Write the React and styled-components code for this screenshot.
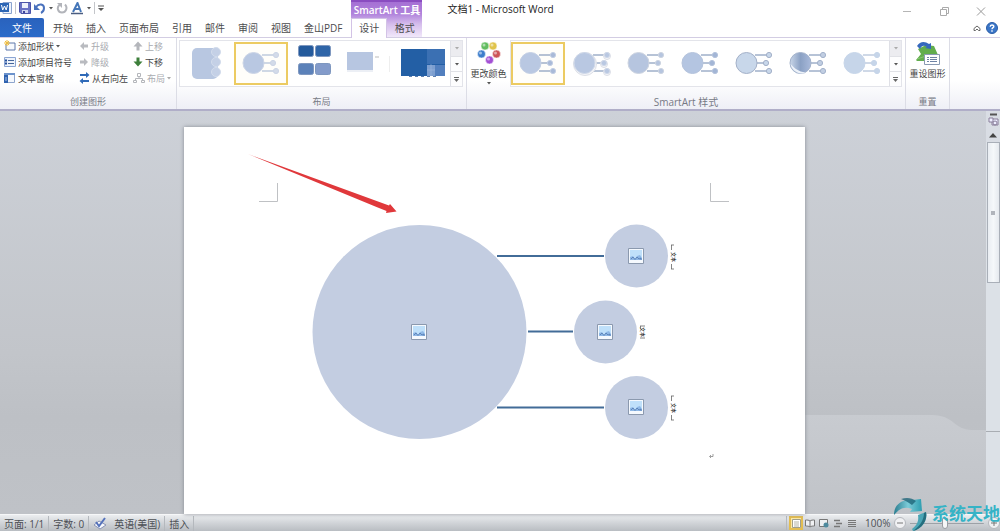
import React from "react";
import styled, { createGlobalStyle, css } from "styled-components";

const GlobalStyle = createGlobalStyle`
  * { box-sizing: border-box; }
  html, body { margin: 0; height: 100%; }
  body {
    font-family: "Open Sans", "Noto Sans CJK SC", sans-serif;
    font-size: 10px;
    color: #4c4c4e;
    overflow: hidden;
  }
  button {
    margin: 0;
    padding: 0;
    border: 0;
    background: none;
    font: inherit;
    color: inherit;
    white-space: nowrap;
  }
  svg { display: block; flex: none; }
`;

const Window = styled.div`
  position: relative;
  display: flex;
  flex-direction: column;
  height: 100vh;
  background: #fff;
`;

/* ---------- title bar and tabs ---------- */

const Header = styled.header`
  display: flex;
  flex: none;
  border-bottom: 1px solid #d3cde3;
`;

const HeaderColumn = styled.div`
  display: flex;
  flex-direction: column;
  flex: ${(p) => (p.$grow ? 1 : "none")};
`;

const QuickAccess = styled.div`
  display: flex;
  align-items: center;
  gap: 3px;
  height: 18px;
  padding-bottom: 2px;
`;

const Divider = styled.span`
  width: 1px;
  height: 12px;
  background: #c4c6ca;
`;

const TabRow = styled.nav`
  display: flex;
  align-items: stretch;
  gap: 13px;
  height: 19px;
  padding-right: 9px;
`;

const Tab = styled.button`
  line-height: 18px;
`;

const FileTab = styled(Tab)`
  width: 44px;
  margin-right: -4px;
  color: #fff;
  background: linear-gradient(#2a62bd, #2b6bc9);
  border-radius: 1px 2px 0 0;
`;

const ContextGroup = styled.div`
  width: 71px;
  background: linear-gradient(#a56fd4 0, #b184dc 12px, #d5bdec 22px, #f1e8fa 100%);
  border-top: 2px solid #8a4cc0;
`;

const ContextTitle = styled.div`
  height: 16px;
  line-height: 16px;
  text-align: center;
  color: #fff;
  font-weight: 600;
  white-space: nowrap;
`;

const ContextTabs = styled.div`
  display: grid;
  grid-template-columns: 1fr 1fr;
  height: 19px;
`;

const ContextTab = styled(Tab)`
  ${(p) =>
    p.$active &&
    css`
      background: #fff;
      border: 1px solid #d3c3e6;
      border-bottom: 0;
      margin-bottom: -1px;
      padding-bottom: 2px;
      line-height: 16px;
    `}
`;

const TitleBar = styled.div`
  display: flex;
  align-items: center;
  justify-content: space-between;
  height: 20px;
  padding: 0 14px 0 25px;
`;

const Title = styled.h1`
  margin: 0;
  font-size: 10px;
  line-height: 14px;
  padding-bottom: 2px;
  font-weight: 400;
  color: #222;
`;

const WindowButtons = styled.div`
  display: flex;
  gap: 27px;
  padding-top: 2px;
`;

const HelpRow = styled.div`
  display: flex;
  justify-content: flex-end;
  align-items: center;
  gap: 5px;
  height: 17px;
  padding: 0 2px 1px 0;
`;

/* ---------- ribbon ---------- */

const Ribbon = styled.section`
  display: flex;
  flex: none;
  height: 73px;
  background: linear-gradient(#fff 60%, #eeeff6);
  border-bottom: 2px solid #b0aec8;
`;

const Group = styled.div`
  display: flex;
  flex-direction: column;
  flex: none;
  width: ${(p) => p.$width}px;
  border-right: 1px solid #dcdde6;
`;

const GroupBody = styled.div`
  display: flex;
  flex: 1;
  padding-left: ${(p) => p.$inset || 0}px;
`;

const GroupLabel = styled.div`
  height: 15px;
  line-height: 16px;
  text-align: center;
  font-size: ${(p) => (p.$latin ? 10 : 9)}px;
  color: #777a85;
`;

const CommandGrid = styled.div`
  display: grid;
  grid-template-columns: 75px 54px 42px;
  grid-auto-rows: 16px;
`;

const Command = styled.button`
  display: flex;
  align-items: center;
  gap: 2px;
  font-size: 9px;
  color: ${(p) => (p.disabled ? "#a9abb0" : "#444")};
`;

const LargeCommand = styled.button`
  display: flex;
  flex-direction: column;
  align-items: center;
  gap: 2px;
  width: 43px;
  padding-top: 3px;
  font-size: 9px;
  line-height: 13px;
  color: #444;
`;

const Gallery = styled.div`
  display: flex;
  height: 47px;
  margin-top: 2px;
  background: #fff;
  border: 1px solid #e3e4ea;
`;

const GalleryItem = styled.button`
  width: 54px;
  height: 43px;
  margin-top: 1px;
  overflow: hidden;
  ${(p) =>
    p.$selected &&
    css`
      outline: 2px solid #eccb62;
      outline-offset: -2px;
      background: #fffefa;
    `}
`;

const GalleryScroll = styled.div`
  display: grid;
  grid-template-rows: repeat(3, 1fr);
  width: 12px;
  margin-left: auto;
  border-left: 1px solid #dfe0e6;
`;

const ScrollStep = styled.button`
  display: grid;
  place-items: center;
  background: ${(p) => (p.disabled ? "#ececf0" : "#fdfdfe")};
  & + & { border-top: 1px solid #e0e1e6; }
`;

/* ---------- document ---------- */

const Workspace = styled.main`
  position: relative;
  display: flex;
  flex: 1;
  min-height: 0;
  background: linear-gradient(#cdd1d8, #c2c5ca 60%, #bdc0c5 76%, #bfc2c7);
`;

const Swoosh = styled.svg`
  position: absolute;
  right: 14px;
  bottom: 0;
`;

const Desk = styled.div`
  position: relative;
  display: flex;
  justify-content: center;
  flex: 1;
  padding: 16px 0 0 2px;
`;

const Paper = styled.article`
  width: 621px;
  max-width: 90%;
  background: #fff;
  box-shadow: 0 0 4px #858a92;
`;

const ScrollBar = styled.aside`
  position: relative;
  display: flex;
  flex-direction: column;
  align-items: center;
  width: 14px;
  background: #dce1e7;
`;

const ScrollButton = styled.button`
  display: grid;
  place-items: center;
  width: 14px;
  height: ${(p) => p.$height}px;
  background: #d9dde4;
`;

const ScrollThumb = styled.div`
  display: grid;
  place-items: center;
  width: 13px;
  height: 35%;
  background: linear-gradient(90deg, #e9edf2, #f5f8fa 50%, #e5e9ee);
  border: 1px solid #a9afb8;
`;

const ScrollGrip = styled.span`
  width: 4px;
  height: 4px;
  background: #b1b5bc;
`;

const TrackEnd = styled.span`
  width: 14px;
  margin: auto 0 82px;
  border-top: 1px solid #a9adb3;
`;

/* ---------- status bar ---------- */

const StatusBar = styled.footer`
  display: flex;
  align-items: center;
  flex: none;
  height: 17px;
  background: linear-gradient(#eceef0, #d3d6da 45%, #b9bdc2);
  border-top: 1px solid #f6f7f8;
  color: #4c4f54;
`;

const StatusItem = styled.button`
  display: flex;
  align-items: center;
  gap: 7px;
  height: 15px;
  padding: 0 4px;
  border-right: 1px solid #b4b8bd;
`;

const Views = styled.div`
  display: flex;
  align-items: center;
  margin-left: auto;
  border-left: 1px solid #b4b8bd;
  padding-left: 2px;
`;

const ViewButton = styled.button`
  display: grid;
  place-items: center;
  width: 14px;
  height: 14px;
  ${(p) =>
    p.$active &&
    css`
      background: #fbe9a6;
      box-shadow: inset 0 0 0 2px #e3bd51;
    `}
`;

const ZoomControl = styled.div`
  display: flex;
  align-items: center;
  width: 141px;
  padding-left: 6px;
  gap: 4px;
`;

const ZoomStep = styled.button`
  display: grid;
  place-items: center;
  flex: none;
  width: 12px;
  height: 12px;
  border-radius: 6px;
  border: 1px solid #b5b8bd;
  background: #f0f1f3;
`;

const ZoomSlider = styled.input`
  appearance: none;
  flex: 1;
  min-width: 0;
  height: 12px;
  margin: 0;
  background: linear-gradient(#9da1a7, #9da1a7) center / 100% 1px no-repeat;
  &::-webkit-slider-thumb {
    appearance: none;
    width: 6px;
    height: 11px;
    border: 1px solid #999da3;
    border-radius: 0 0 3px 3px;
    background: #f6f7f8;
  }
`;

const Watermark = styled.div`
  position: absolute;
  right: 0;
  bottom: 0;
  display: flex;
  width: 106px;
  height: 34px;
  overflow: hidden;
  pointer-events: none;
`;

const WatermarkText = styled.span`
  flex: none;
  margin-left: 4px;
  font: 700 17px/32px "Noto Sans CJK SC", sans-serif;
  color: #35b3c6;
`;

/* ---------- drawings ---------- */

const Caret = ({ color = "#555" }) => (
  <svg width="4" height="3" viewBox="0 0 4 3"><path d="M0 0h4L2 2.6z" fill={color} /></svg>
);

const ArrowIcon = ({ up, color }) => (
  <svg width="10" height="10" viewBox="0 0 10 10">
    <path transform={up ? undefined : "rotate(180 5 5)"} d="M5 .5 9.500 5.500H6.500v4h-3v-4H.5z" fill={color} />
  </svg>
);

const SideArrow = ({ right }) => (
  <svg width="10" height="10" viewBox="0 0 10 10">
    <path transform={right ? "rotate(180 5 5)" : undefined} d="M1 5 5 1v2.500h4v3H5V9z" fill="#b9bbc0" />
  </svg>
);

const AddShapeIcon = () => (
  <svg width="12" height="12" viewBox="0 0 12 12">
    <path d="M3 3h8v7H2V4" fill="#f7f9fd" stroke="#5f79ab" />
    <path d="M3 0v6M0 3h6M1 1l4 4M5 1 1 5" stroke="#f0bd3c" />
  </svg>
);

const BulletIcon = () => (
  <svg width="12" height="12" viewBox="0 0 12 12">
    <path d="M.5 1.500h11v9H.5z" fill="#eef3fb" stroke="#8ba5d2" />
    <path d="M1 4.500h2M1 7.500h2" stroke="#234f9c" strokeWidth="2" />
    <path d="M4 4.500h6M4 7.500h6" stroke="#44659b" />
  </svg>
);

const PaneIcon = () => (
  <svg width="12" height="12" viewBox="0 0 12 12">
    <path d="M.5 1.500h10v9H.5z" fill="#f5f8fd" stroke="#8ea5cd" />
    <path d="M0 1h11v2H0z" fill="#6b92cc" /><path d="M0 3h4v8H0z" fill="#2f62b0" />
    <path d="M1 6h2M1 8h2" stroke="#a9c0e4" />
  </svg>
);

const SwapIcon = () => (
  <svg width="11" height="12" viewBox="0 0 11 12">
    <path d="M1 2h6V0l3.500 3L7 6V4H1zM10 8H4V6L.5 9 4 12v-2h6z" fill="#2f6ab8" />
  </svg>
);

const OrgIcon = () => (
  <svg width="12" height="12" viewBox="0 0 12 12" fill="none" stroke="#b4b6bb">
    <path d="M4.500 1.500h3v3h-3zM.5 8.500h3v2h-3zM8.500 8.500h3v2h-3zM6 5v2M2.500 8V6.500h7V8" />
  </svg>
);

const LinkedCircles = ({ fill = "#b9c8e2", stroke = "#c3cfe4", small, faded, shadow, glossy }) => (
  <svg width="54" height="43" viewBox="0 0 54 43">
    <defs>
      <linearGradient id="gloss" x1="0" y1="0" x2="1" y2="0">
        <stop offset="0" stopColor="#c9d6e8" />
        <stop offset=".5" stopColor="#8ba1c4" />
        <stop offset="1" stopColor="#a9badb" />
      </linearGradient>
    </defs>
    <path d="M28 13h14M30 21h9M28 29h14" stroke={faded ? "#9fb2cf" : "#6f87ae"} />
    {shadow && (
      <g fill="#f4f5f8" stroke="#dcdfe7">
        <circle cx="20" cy="22" r="11.500" />
        <circle cx="42" cy="14" r="3.500" /><circle cx="39" cy="22" r="3.500" /><circle cx="42" cy="30" r="3.500" />
      </g>
    )}
    <g fill={fill} stroke={stroke}>
      <circle cx="19.500" cy="21" r="10.500" fill={glossy ? "url(#gloss)" : fill} />
      <g fill={small || fill}>
        <circle cx="42" cy="13" r="2.600" /><circle cx="39" cy="21" r="2.600" /><circle cx="42" cy="29" r="2.600" />
      </g>
    </g>
    {glossy && <path d="M9.500 22c1 5 5 9 11 9.500 2 0 3-.5 4-1-7-1-11-4-15-8.500z" fill="#edf2f9" />}
  </svg>
);

const LayoutThumbs = [
  <svg key="a" width="54" height="43" viewBox="0 0 54 43">
    <rect x="12" y="6" width="26" height="31" rx="5" fill="#b8c7e1" />
    <g fill="#c4d0e6" stroke="#d3dcec"><circle cx="36" cy="10" r="4.500" /><circle cx="36" cy="20" r="4.500" /><circle cx="36" cy="30" r="4.500" /></g>
  </svg>,
  <LinkedCircles key="b" small="#d3dbe9" stroke="#ccd5e6" faded />,
  <svg key="c" width="54" height="43" viewBox="0 0 54 43">
    <g stroke="#7e97bf">
      <rect x="10.500" y="3.500" width="15" height="11" rx="2" fill="#245a9c" /><rect x="27.500" y="3.500" width="15" height="11" rx="2" fill="#2f65a8" />
      <rect x="10.500" y="21.500" width="15" height="11" rx="2" fill="#5b81b9" /><rect x="27.500" y="21.500" width="15" height="11" rx="2" fill="#839bca" />
    </g>
  </svg>,
  <svg key="d" width="54" height="43" viewBox="0 0 54 43">
    <path d="M5 10h26v18H5z" fill="#b7c6e1" /><path d="M5 29h26" stroke="#d9dfeb" /><path d="M33 15h4" stroke="#bbb" /><path d="M47.500 14v16" stroke="#eee" />
  </svg>,
  <svg key="e" width="54" height="43" viewBox="0 0 54 43">
    <path d="M5 7h44v27H5z" fill="#235fa5" /><path d="M31 7h18v15H31z" fill="#3b70b3" />
    <path d="M31 23h8v11h-8z" fill="#7d9fd0" /><path d="M39 23h10v11H39z" fill="#527fbe" /><path d="M31 28h8M35 22v12" stroke="#a6bce0" strokeOpacity=".5" />
    <path d="M13 34.500h30" stroke="#5c7fb0" strokeDasharray="3 3" />
  </svg>,
];

const PictureIcon = ({ x, y }) => (
  <g transform={`translate(${x - 8} ${y - 8})`}>
    <path d="M.5.5h15v15H.5z" fill="#f5f9fe" stroke="#8b99ae" />
    <path d="M2 2h12v10H2z" fill="#bfe0fa" />
    <path d="M2 12V9l3-1 2 3 2-3 3-1 2 3v2z" fill="#8fb8e6" />
    <path d="m3 11 2-2 2 2.500L9 9l2 2 2-1v2" fill="none" stroke="#5279b0" strokeWidth=".8" />
  </g>
);

const NodeLabel = ({ x, y, wide }) => (
  <g transform={`translate(${x} ${y}) rotate(90)`}>
    <text y="2" textAnchor="middle" fontSize="5" fill="#111">文本</text>
    <path d={wide ? "M-12 2.500h5M7 2.500h5M-12 0v3M12 0v3" : "M-6 2.500h3M-6-2v5M6-2v5"} fill="none" stroke="#666" strokeWidth=".8" />
  </g>
);

const SmartArt = () => (
  <svg width="100%" viewBox="184 127 621 387" role="img" aria-label="SmartArt">
    <path d="M277.500 183v18.500H259M710.500 183v18.500H729" fill="none" stroke="#bfc1c4" />
    <path d="M497 256h107M528 331.500h45M497 407.500h107" stroke="#426c98" strokeWidth="2" />
    <g fill="#c3cde1">
      <circle cx="419.500" cy="332" r="107" />
      <circle cx="636.500" cy="256" r="31.500" />
      <circle cx="605.500" cy="332" r="31.500" />
      <circle cx="636.500" cy="407.500" r="31.500" />
    </g>
    <PictureIcon x={419} y={332} />
    <PictureIcon x={636} y={256} />
    <PictureIcon x={605} y={332} />
    <PictureIcon x={636} y={407} />
    <NodeLabel x={674} y={257} wide />
    <NodeLabel x={643} y={332} />
    <NodeLabel x={674} y={408} wide />
    <path d="m248 154 141 51.500 1-1.500 6.500 7.500-10.500 1.500.5-2-10-4z" fill="#e0383b" />
    <path d="M713 454v2.500h-3m1-1.500-1.500 1.500 1.500 1.500" fill="none" stroke="#777" strokeWidth=".7" />
  </svg>
);

const steps = ["向上", "向下", "更多"];
const Steps = () => (
  <GalleryScroll>
    {steps.map((s, i) => (
      <ScrollStep key={s} aria-label={s} disabled={i === 0}>
        {i === 2 ? (
          <svg width="5" height="5" viewBox="0 0 5 5"><path d="M0 .5h5" stroke="#666" /><path d="M0 2h5L2.500 5z" fill="#666" /></svg>
        ) : (
          <Caret color={i ? "#555" : "#aaa"} />
        )}
      </ScrollStep>
    ))}
  </GalleryScroll>
);

const styleLooks = [
  { small: "#a9bad8" },
  { shadow: true, stroke: "#cfd8e9" },
  { fill: "#b6c5df", stroke: "#cdd4e0" },
  { fill: "#b4c5e1", stroke: "#b4c3dc", small: "#a3b6d6" },
  { fill: "#c8d7ea", stroke: "#a3b0c8" },
  { glossy: true, stroke: "#a3b2cb", fill: "#c1cee2" },
  { fill: "#c6d5e9", stroke: "#c6d5e9", faded: true },
];

export default function App() {
  return (
    <Window>
      <GlobalStyle />
      <Header>
        <HeaderColumn>
          <QuickAccess>
            <svg width="12" height="14" viewBox="0 0 12 14">
              <path d="M3 1.500h8.500v11H3z" fill="#eef3fb" stroke="#8ba4cf" /><path d="M0 2h9v9H0z" fill="#2d66b5" />
              <path d="m1.500 4 1.200 5 1.800-4 1.700 4 1.300-5" fill="none" stroke="#fff" />
            </svg>
            <Divider />
            <button aria-label="保存">
              <svg width="12" height="12" viewBox="0 0 12 12"><path d="M.5.5h11v11H2l-1.500-1.500z" fill="#6a72c4" stroke="#4c54a8" /><path d="M3 1h6v5H3z" fill="#edf0fa" /><path d="M3 8h6v3H3z" fill="#cfd4ee" /><path d="M4 9h2v2H4z" fill="#3f479c" /></svg>
            </button>
            <button aria-label="撤消">
              <svg width="12" height="12" viewBox="0 0 12 12"><path d="M2 5c3-4 8-3 8 1 0 2-1 4-3 5" fill="none" stroke="#4a72bd" strokeWidth="2" /><path d="M0 2v6h6z" fill="#4a72bd" /></svg>
            </button>
            <Caret />
            <button aria-label="重复">
              <svg width="12" height="12" viewBox="0 0 12 12"><path d="M9 2.500c3 3 1 8-3 8s-6-5-2-8" fill="none" stroke="#b2b4ba" strokeWidth="2" /><path d="M1 1h5v5z" fill="#b2b4ba" /></svg>
            </button>
            <button aria-label="字体颜色">
              <svg width="13" height="13" viewBox="0 0 13 13"><path d="m2 10 4.500-9 3.500 9M4 7h5" fill="none" stroke="#4576b8" strokeWidth="2" /><path d="M0 11.500h12" stroke="#4b5d80" strokeWidth="1.500" /></svg>
            </button>
            <Caret />
            <Divider />
            <svg width="6" height="7" viewBox="0 0 6 7"><path d="M0 1h6" stroke="#555" /><path d="M0 3h6L3 6z" fill="#555" /></svg>
          </QuickAccess>
          <TabRow>
            <FileTab>文件</FileTab>
            {["开始", "插入", "页面布局", "引用", "邮件", "审阅", "视图", "金山PDF"].map((t) => (
              <Tab key={t}>{t}</Tab>
            ))}
          </TabRow>
        </HeaderColumn>
        <ContextGroup>
          <ContextTitle>SmartArt 工具</ContextTitle>
          <ContextTabs>
            <ContextTab $active>设计</ContextTab>
            <ContextTab>格式</ContextTab>
          </ContextTabs>
        </ContextGroup>
        <HeaderColumn $grow>
          <TitleBar>
            <Title>文档1 - Microsoft Word</Title>
            <WindowButtons>
              <button aria-label="最小化"><svg width="10" height="9" viewBox="0 0 10 9"><path d="M1 4.500h8" stroke="#b5b5b5" /></svg></button>
              <button aria-label="还原"><svg width="10" height="9" viewBox="0 0 10 9" fill="none" stroke="#aaa"><path d="M1.500 2.500h6v6h-6zM3.500 2V.5h6v6H8" /></svg></button>
              <button aria-label="关闭"><svg width="10" height="9" viewBox="0 0 10 9" stroke="#999"><path d="m1 .5 8 8M9 .5l-8 8" /></svg></button>
            </WindowButtons>
          </TitleBar>
          <HelpRow>
            <button aria-label="折叠功能区"><svg width="8" height="7" viewBox="0 0 8 7"><path d="M1 3.500 4 1l3 2.500M1 3.500v2h1.500L4 4l1.500 1.500H7v-2" fill="none" stroke="#666" /></svg></button>
            <button aria-label="帮助">
              <svg width="12" height="12" viewBox="0 0 12 12"><circle cx="6" cy="6" r="5.500" fill="#3a76c8" stroke="#2c5da6" /><path d="M4.200 4.700c0-2.300 3.600-2.300 3.600-.2C7.800 5.700 6 5.700 6 7.300M6 8.300v1.400" fill="none" stroke="#fff" strokeWidth="1.400" /></svg>
            </button>
          </HelpRow>
        </HeaderColumn>
      </Header>

      <Ribbon>
        <Group $width={177}>
          <GroupBody $inset={4}>
            <CommandGrid>
              <Command><AddShapeIcon />添加形状 <Caret /></Command>
              <Command disabled><SideArrow />升级</Command>
              <Command disabled><ArrowIcon up color="#b4b6bb" />上移</Command>
              <Command><BulletIcon />添加项目符号</Command>
              <Command disabled><SideArrow right />降级</Command>
              <Command><ArrowIcon color="#3d7f3a" />下移</Command>
              <Command><PaneIcon />文本窗格</Command>
              <Command><SwapIcon />从右向左</Command>
              <Command disabled><OrgIcon />布局 <Caret color="#aaa" /></Command>
            </CommandGrid>
          </GroupBody>
          <GroupLabel>创建图形</GroupLabel>
        </Group>

        <Group $width={290}>
          <GroupBody $inset={2}>
            <Gallery>
              {LayoutThumbs.map((thumb, i) => (
                <GalleryItem key={i} $selected={i === 1} aria-label={`布局 ${i + 1}`}>{thumb}</GalleryItem>
              ))}
              <Steps />
            </Gallery>
          </GroupBody>
          <GroupLabel>布局</GroupLabel>
        </Group>

        <Group $width={439}>
          <GroupBody>
            <LargeCommand>
              <svg width="24" height="24" viewBox="0 0 24 24">
                <g stroke="#fff" strokeWidth=".5">
                  <circle cx="8" cy="5" r="4" fill="#62bd60" /><circle cx="16" cy="5" r="4" fill="#e0c44b" />
                  <circle cx="4.500" cy="13" r="4" fill="#3d7dcc" /><circle cx="19.500" cy="13" r="4" fill="#cc5558" />
                  <circle cx="12.500" cy="19" r="4" fill="#a34fd4" />
                </g>
                <g fill="#fff" opacity=".5"><circle cx="7" cy="4" r="1.500" /><circle cx="15" cy="4" r="1.500" /><circle cx="3.500" cy="12" r="1.500" /><circle cx="18.500" cy="12" r="1.500" /><circle cx="11.500" cy="18" r="1.500" /></g>
              </svg>
              更改颜色
              <Caret />
            </LargeCommand>
            <Gallery>
              {styleLooks.map((look, i) => (
                <GalleryItem key={i} $selected={i === 0} aria-label={`样式 ${i + 1}`}><LinkedCircles {...look} /></GalleryItem>
              ))}
              <Steps />
            </Gallery>
          </GroupBody>
          <GroupLabel $latin>SmartArt 样式</GroupLabel>
        </Group>

        <Group $width={44}>
          <GroupBody>
            <LargeCommand>
              <svg width="26" height="24" viewBox="0 0 26 24">
                <path d="M1 19 6 13 3 8l8-4 8 1 4 9v6H2z" fill="#62ad4d" /><path d="M2 18l12-4" fill="none" stroke="#87c774" />
                <path d="M2 5c3-5 8-5 12-2l2-1v6l-6-1 2-1C9 4 7 4 5 8z" fill="#3568bd" />
                <path d="M9.500 13.500h15v10h-15z" fill="#fff" stroke="#8a9ab2" /><path d="M12 16.500h2m1 0h7M12 18.500h2m1 0h7M12 20.500h2m1 0h7" stroke="#6e83a5" />
              </svg>
              重设图形
            </LargeCommand>
          </GroupBody>
          <GroupLabel>重置</GroupLabel>
        </Group>
      </Ribbon>

      <Workspace>
        <Swoosh width="182" height="100" viewBox="0 0 182 100">
          <defs><linearGradient id="wave" x1="0" y1="0" x2="0" y2="1"><stop offset="0" stopColor="#c8cbd0" /><stop offset="1" stopColor="#c0c3c8" /></linearGradient></defs>
          <path d="M0 1h128c22 0 22 15 40 15h14v84H0z" fill="url(#wave)" />
        </Swoosh>
        <Desk>
          <Paper><SmartArt /></Paper>
        </Desk>
        <ScrollBar>
          <ScrollButton $height={17} aria-label="标尺">
            <svg width="11" height="14" viewBox="0 0 11 14"><path d="M2 1.500h7" stroke="#555" strokeWidth="2" /><path d="M1 5h4v4H1zM5 6h5v6H4V9" fill="#eef" stroke="#897f9a" /><circle cx="7" cy="10" r="2" fill="none" stroke="#897f9a" /></svg>
          </ScrollButton>
          <ScrollButton $height={14} aria-label="向上滚动">
            <svg width="8" height="5" viewBox="0 0 8 5"><path d="M0 4.500 4 0l4 4.500z" fill="#444" /></svg>
          </ScrollButton>
          <ScrollThumb><ScrollGrip /></ScrollThumb>
          <TrackEnd />
        </ScrollBar>
      </Workspace>

      <StatusBar>
        <StatusItem>页面: 1/1</StatusItem>
        <StatusItem>字数: 0</StatusItem>
        <StatusItem>
          <svg width="14" height="13" viewBox="0 0 14 13"><path d="m1 8 5-4 7 4-6 4z" fill="#f8f9fc" stroke="#8792b5" /><path d="m3 5 3 4 6-8" fill="none" stroke="#5572bb" strokeWidth="2" /></svg>
          英语(美国)
        </StatusItem>
        <StatusItem>插入</StatusItem>
        <Views>
          <ViewButton $active aria-label="页面视图"><svg width="9" height="9" viewBox="0 0 9 9"><path d="M.5.5h8v8h-8z" fill="#fff" stroke="#a09f8c" /><path d="M2 3h5M2 5h5M2 7h5" stroke="#b5b4a5" /></svg></ViewButton>
          <ViewButton aria-label="阅读版式"><svg width="10" height="9" viewBox="0 0 10 9"><path d="M5 2C4 1 2 1 .5 1v6C2 7 4 7 5 8c1-1 3-1 4.500-1V1C8 1 6 1 5 2v6" fill="#f0f1f3" stroke="#777" /></svg></ViewButton>
          <ViewButton aria-label="Web 版式"><svg width="10" height="10" viewBox="0 0 10 10"><path d="M.5 1.500h8v7h-8z" fill="#eef0f2" stroke="#777" /><circle cx="7" cy="7" r="2.500" fill="#4e8a9e" /></svg></ViewButton>
          <ViewButton aria-label="大纲视图"><svg width="10" height="9" viewBox="0 0 10 9"><path d="M1 1.500h6M3 4.500h6M1 7.500h6" stroke="#777" strokeWidth="1.500" /></svg></ViewButton>
          <ViewButton aria-label="草稿"><svg width="10" height="9" viewBox="0 0 10 9"><path d="M1 1.500h8M1 3.500h8M1 5.500h8M1 7.500h8" stroke="#777" /></svg></ViewButton>
        </Views>
        <ZoomControl>
          <button>100%</button>
          <ZoomStep aria-label="缩小"><svg width="6" height="2" viewBox="0 0 6 2"><path d="M0 1h6" stroke="#777" /></svg></ZoomStep>
          <ZoomSlider type="range" min="0" max="100" defaultValue="47" aria-label="显示比例" />
          <ZoomStep aria-label="放大"><svg width="6" height="6" viewBox="0 0 6 6"><path d="M0 3h6M3 0v6" stroke="#777" /></svg></ZoomStep>
        </ZoomControl>
      </StatusBar>

      <Watermark>
        <svg width="34" height="34" viewBox="0 0 34 34">
          <defs>
            <linearGradient id="ribbonTop" x1="0" y1="0" x2="1" y2="0"><stop offset="0" stopColor="#2a7d90" /><stop offset=".5" stopColor="#7ccbd8" /><stop offset="1" stopColor="#2d9db0" /></linearGradient>
          </defs>
          <path d="M0 18C0 8 7 2 18 3l9-1 1 12-12 1 2-3C10 9 5 12 0 18z" fill="url(#ribbonTop)" />
          <path d="M7 2c6-2 11-1 15 2l-4 4C14 5 10 3 7 2z" fill="#1f6579" opacity=".8" />
          <path d="m24 18 8-3c2 8-4 17-13 19l-1-2c5-4 7-8 6-14z" fill="#4aa5b5" />
          <path d="m30 16 2-1c2 8-4 17-13 19 7-5 11-11 11-18z" fill="#256e7e" />
        </svg>
        <WatermarkText>系统天地</WatermarkText>
      </Watermark>
    </Window>
  );
}
